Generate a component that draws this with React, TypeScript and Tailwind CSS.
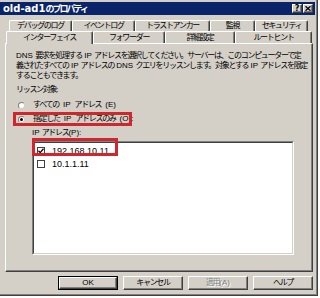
import React from 'react';

const CJK = /([\u3000-\u30ff\u3400-\u9fff\uff00-\uffef]+)/;

// split Japanese runs so they can be squeezed like the MS UI Gothic original
function T({ s, tight = 'tracking-[-1.3px]' }: { s: string; tight?: string }) {
  return (
    <>
      {s.split(CJK).map((part, i) =>
        i % 2 === 1 ? (
          <span key={i} className={tight}>
            {part}
          </span>
        ) : (
          <span key={i}>{part}</span>
        )
      )}
    </>
  );
}

const raised =
  'border border-t-white border-l-white border-r-[#404040] border-b-[#404040] shadow-[inset_-1px_-1px_0_#808080] bg-[#d4d0c8]';

function Tab({ label, w, selected }: { label: string; w: number; selected?: boolean }) {
  return (
    <div
      style={{ width: w }}
      className={`flex items-center justify-center border-l border-t border-r border-l-white border-t-white border-r-[#404040] rounded-t-[2px] shadow-[inset_-1px_0_0_#808080] bg-[#d4d0c8] ${
        selected ? 'relative z-10 h-[13px] -mb-[1px]' : 'h-full'
      }`}
    >
      <T s={label} />
    </div>
  );
}

function Button({ label, def, disabled }: { label: string; def?: boolean; disabled?: boolean }) {
  const inner = (
    <div
      className={`${raised} h-full flex items-center justify-center ${
        disabled ? 'text-[#808080] [text-shadow:1px_1px_0_white]' : ''
      }`}
    >
      <T s={label} />
    </div>
  );
  return def ? (
    <div className="w-[60px] h-[14px] border border-black">{inner}</div>
  ) : (
    <div className="w-[60px] h-[14px]">{inner}</div>
  );
}

function Radio({ checked }: { checked?: boolean }) {
  return (
    <div className="w-[7px] h-[7px] rounded-full bg-white border border-t-[#808080] border-l-[#808080] border-r-[#d4d0c8] border-b-[#d4d0c8] flex items-center justify-center">
      {checked && <div className="w-[3px] h-[3px] rounded-full bg-black" />}
    </div>
  );
}

function Check({ checked }: { checked?: boolean }) {
  return (
    <div className="w-[8px] h-[8px] bg-white border border-[#404040] flex items-center justify-center">
      {checked && (
        <svg width="6" height="6" viewBox="0 0 6 6">
          <path d="M0.5 2.8 L2.2 4.6 L5.5 0.8" stroke="black" strokeWidth="1.3" fill="none" />
        </svg>
      )}
    </div>
  );
}

export default function App() {
  return (
    <div className="w-[320px] h-[298px] bg-white font-['Liberation_Sans','Noto_Sans_CJK_JP',sans-serif] text-[8px] text-black leading-none">
      <div className="w-[318px] h-[296px] border-r border-b border-[#404040]">
        <div className="h-full bg-[#d4d0c8] border-r border-b border-[#808080] flex flex-col pt-[2px]">
          {/* title bar */}
          <div className="h-[13px] mr-[1px] bg-[#0a246a] flex items-center pl-[3px] pr-[2px] text-white">
            <div className="flex-1 font-bold text-[10px] whitespace-nowrap">
              <span className="font-['DejaVu_Sans',sans-serif]">old-ad1</span>
              <span className="font-['Noto_Sans_CJK_JP',sans-serif] text-[9px] tracking-[-2px]">のプロパティ</span>
            </div>
            <div className="flex gap-[1px]">
              <div className={`${raised} w-[10px] h-[9px] flex items-center justify-center text-black font-bold text-[8px] font-['DejaVu_Sans',sans-serif]`}>
                ?
              </div>
              <div className={`${raised} w-[10px] h-[9px] flex items-center justify-center`}>
                <svg width="6" height="5" viewBox="0 0 6 5">
                  <path d="M0.5 0.3 L5.5 4.7 M5.5 0.3 L0.5 4.7" stroke="black" strokeWidth="1.3" />
                </svg>
              </div>
            </div>
          </div>

          {/* tabs */}
          <div className="mt-[5px] ml-[9px] h-[11px] flex whitespace-nowrap">
            <Tab label="デバッグのログ" w={63} />
            <Tab label="イベント ログ" w={63} />
            <Tab label="トラスト アンカー" w={75} />
            <Tab label="監視" w={45} />
            <Tab label="セキュリティ" w={53} />
          </div>
          <div className="ml-[6px] h-[12px] flex items-end whitespace-nowrap">
            <Tab label="インターフェイス" w={87} selected />
            <Tab label="フォワーダー" w={72} />
            <Tab label="詳細設定" w={70} />
            <Tab label="ルート ヒント" w={77} />
          </div>

          {/* panel */}
          <div className="relative ml-[5px] w-[308px] h-[229px] border border-t-white border-l-white border-r-[#404040] border-b-[#404040] shadow-[inset_-1px_-1px_0_#808080] pl-[10px] pt-[7px] leading-[10px] whitespace-nowrap">
            <div>
              <T s="DNS 要求を処理する IP アドレスを選択してください。サーバーは、このコンピューターで定" />
            </div>
            <div>
              <T s="義されたすべての IP アドレスの DNS クエリをリッスンします。対象とする IP アドレスを限定" />
            </div>
            <div>
              <T s="することもできます。" />
            </div>

            <div className="mt-[4px]">
              <T s="リッスン対象:" />
            </div>
            <div className="mt-[5px] h-[10px] flex items-center ml-[2px] gap-[4px]">
              <Radio />
              <T s="すべての IP アドレス(E)" />
            </div>
            <div className="mt-[4px] h-[10px] flex items-center ml-[2px] gap-[4px]">
              <Radio checked />
              <T s="指定した IP アドレスのみ(O):" />
            </div>
            <div className="mt-[4px] ml-[16px]">
              <T s="IP アドレス(P):" />
            </div>

            <div className="mt-[3px] ml-[16px] w-[262px] h-[114px] border border-t-[#808080] border-l-[#808080] border-r-white border-b-white">
              <div className="h-full bg-white border border-t-[#404040] border-l-[#404040] border-r-[#d4d0c8] border-b-[#d4d0c8] pl-[3px] pt-[1px] text-[9px]">
                <div className="h-[13px] flex items-center gap-[7px]">
                  <Check checked />
                  <span>192.168.10.11</span>
                </div>
                <div className="h-[13px] flex items-center gap-[7px]">
                  <Check />
                  <span>10.1.1.11</span>
                </div>
              </div>
            </div>

            {/* red annotation boxes */}
            <div className="absolute left-[7px] top-[68px] w-[119px] h-[14px] border-[3px] border-[#d0262e]" />
            <div className="absolute left-[26px] top-[94px] w-[86px] h-[18px] border-[3px] border-[#d0262e]" />
          </div>

          {/* buttons */}
          <div className="mt-[4px] ml-[58px] flex gap-[5px] whitespace-nowrap">
            <Button label="OK" def />
            <Button label="キャンセル" />
            <Button label="適用(A)" disabled />
            <Button label="ヘルプ" />
          </div>
        </div>
      </div>
    </div>
  );
}
